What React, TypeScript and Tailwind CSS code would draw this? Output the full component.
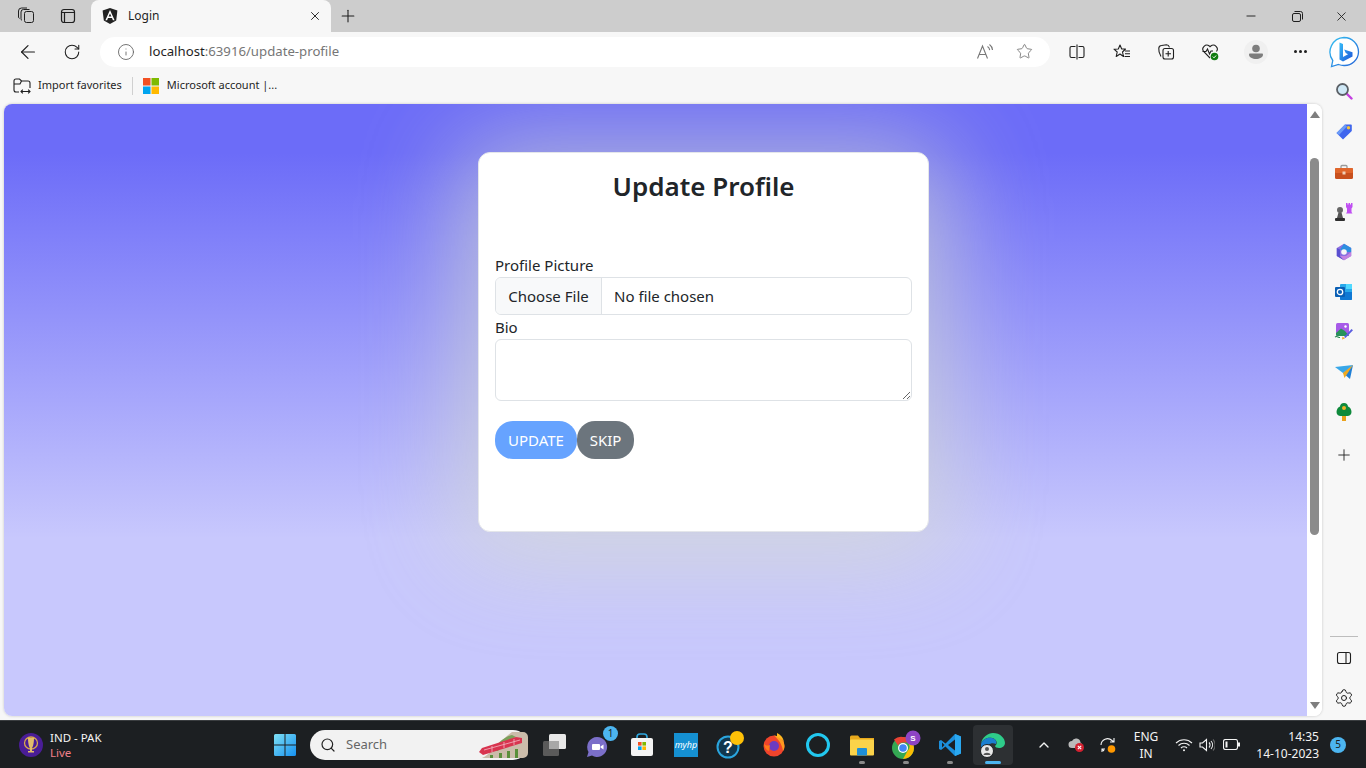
import { ArrowLeft, ChevronUp, Info, Minus, Plus, RotateCw, Search, Settings, Star, X } from "lucide-react";

const ink = "#1f1f1f";

function Collections() {
  return (
    <svg width="18" height="18" viewBox="0 0 18 18" fill="none" stroke={ink} strokeWidth="1">
      <rect x="7.5" y="4.5" width="9" height="11" rx="2" />
      <path d="M5 13.5a2 2 0 0 1-1-1.7V5a2.5 2.5 0 0 1 2.5-2.5h6M2.5 11.5A2 2 0 0 1 1.5 10V4A3 3 0 0 1 4.500 1H10" />
    </svg>
  );
}

function TabView() {
  return (
    <svg width="16" height="16" viewBox="0 0 16 16" fill="none" stroke={ink} strokeWidth="1.2">
      <rect x="1.500" y="1.500" width="13" height="13" rx="2.500" />
      <path d="M1.500 4.500h13M4.500 4.500v10" />
    </svg>
  );
}

function AngularLogo() {
  return (
    <svg width="16" height="16" viewBox="0 0 16 16">
      <path d="M8 0 .6 2.600l1.200 9.800L8 16l6.200-3.600 1.200-9.800z" fill="#222" />
      <path d="M8 2 3.400 12.200h1.700l.9-2.300h4l.9 2.300h1.700zm0 3.600 1.400 3H6.600z" fill="#fff" />
    </svg>
  );
}

function RestoreIcon() {
  return (
    <svg width="11" height="11" viewBox="0 0 11 11" fill="none" stroke={ink} strokeWidth="1">
      <rect x=".5" y="2.500" width="8" height="8" rx="1.500" />
      <path d="M2.500.5h6a2 2 0 0 1 2 2v6" />
    </svg>
  );
}

function ReadAloud() {
  return (
    <svg width="18" height="18" viewBox="0 0 18 18" fill="none" stroke="#777" strokeWidth="1.100">
      <path d="M1.500 15.500 6.500 3l5 12.500M3.200 11.500h6.600" />
      <path d="M11.500 3.500a5 5 0 0 1 2.200 3.600M13.500 1.500a7.500 7.500 0 0 1 3 5.500" />
    </svg>
  );
}

function SplitScreen() {
  return (
    <svg width="16" height="16" viewBox="0 0 16 16" fill="none" stroke={ink} strokeWidth="1.100">
      <path d="M6.500 2.500H2.500a1.500 1.500 0 0 0-1.500 1.500v8a1.500 1.500 0 0 0 1.500 1.500h4M9.500 2.500h4a1.500 1.500 0 0 1 1.500 1.500v8a1.500 1.500 0 0 1-1.500 1.500h-4M8 .5v15" />
    </svg>
  );
}

function Favorites() {
  return (
    <svg width="18" height="18" viewBox="0 0 18 18" fill="none" stroke={ink} strokeWidth="1.100">
      <path d="M7 2 8.700 6h3.800L9.500 9l1 4.500L7 11l-3.800 2.500 1-4.500L1 6.200 5.300 6z" strokeLinejoin="round" />
      <path d="M12 8h5M12 10.800h5M11.500 13.500H17" />
    </svg>
  );
}

function CollectionsPlus() {
  return (
    <svg width="18" height="18" viewBox="0 0 18 18" fill="none" stroke={ink} strokeWidth="1.100">
      <rect x="6" y="5.500" width="10.500" height="10.500" rx="2" />
      <path d="M11.200 8v5.500M8.500 10.700H14" />
      <path d="M4 13.500C2.500 11 1.500 8 1.800 5.500A3 3 0 0 1 4.500 2.500L9.500 1.800c1.500 0 2.500 1 3 2.500" />
    </svg>
  );
}

function HeartBeat() {
  return (
    <svg width="18" height="18" viewBox="0 0 18 18" fill="none">
      <path d="M9 15 2.600 8.500a4 4 0 0 1 5.700-5.500L9 3.800l.8-.8a4 4 0 0 1 5.700 5.500" stroke={ink} strokeWidth="1.100" />
      <path d="M1.500 8.500h3.500l1.500-2.500 2 5 1.500-3h2" stroke={ink} strokeWidth="1.100" />
      <circle cx="13.500" cy="13.500" r="3.800" fill="#107c10" />
      <path d="m11.800 13.600 1.200 1.200 2.100-2.300" stroke="#fff" strokeWidth="1" />
    </svg>
  );
}

function Avatar() {
  return (
    <div className="flex h-6 w-6 items-center justify-center rounded-full bg-[#f0f0f0]">
      <svg width="14" height="16" viewBox="0 0 14 16" fill="#7d7d7d">
        <circle cx="7" cy="4.500" r="3.800" />
        <path d="M1 9.500h12c.8 0 1 .7 1 1.200 0 2.500-3.500 4.300-7 4.300s-7-1.800-7-4.300c0-.5.200-1.200 1-1.200z" />
      </svg>
    </div>
  );
}

function BingLogo() {
  return (
    <svg width="32" height="32" viewBox="0 0 32 32">
      <defs>
        <linearGradient id="bingRing" x1="0" y1="0" x2="1" y2="1">
          <stop offset="0" stopColor="#35c1f1" />
          <stop offset="1" stopColor="#2563d8" />
        </linearGradient>
        <linearGradient id="bingB" x1="0" y1="0" x2="1" y2="1">
          <stop offset="0" stopColor="#37bdf8" />
          <stop offset="1" stopColor="#1b54d8" />
        </linearGradient>
      </defs>
      <path d="M16 1.500A14.500 14.500 0 0 1 30.500 16 14 14 0 0 1 16 29.500c-2 0-3.800-.4-5.500-1L3.500 30.500l1.300-6A14.500 14.500 0 0 1 16 1.500z" fill="#fff" stroke="url(#bingRing)" strokeWidth="1.300" />
      <path d="M11.500 6.500 15 8v13l5-2.800-2.300-1.100-1.500-3.700 8.300 2.900v4.100L15 25.500l-3.500-2z" fill="url(#bingB)" />
    </svg>
  );
}

function ImportFavorites() {
  return (
    <svg width="18" height="18" viewBox="0 0 18 18" fill="none" stroke={ink} strokeWidth="1.100">
      <path d="M6 15H3a2 2 0 0 1-2-2V4a2 2 0 0 1 2-2h3.500L8.500 4H15a2 2 0 0 1 2 2v5" />
      <path d="M1 7h6l1.500-3M8 14.500h9M9.800 12.700 8 14.500l1.800 1.800M15.200 12.700l1.800 1.800-1.800 1.800" />
    </svg>
  );
}

function MicrosoftLogo({ size = 16 }: { size?: number }) {
  return (
    <svg width={size} height={size} viewBox="0 0 16 16">
      <rect width="7.500" height="7.500" fill="#f25022" />
      <rect x="8.500" width="7.500" height="7.500" fill="#7fba00" />
      <rect y="8.500" width="7.500" height="7.500" fill="#00a4ef" />
      <rect x="8.500" y="8.500" width="7.500" height="7.500" fill="#ffb900" />
    </svg>
  );
}

function SideSearch() {
  return (
    <svg width="18" height="18" viewBox="0 0 18 18" fill="none">
      <path d="m11.500 11.500 5 5" stroke="#c33ee0" strokeWidth="2.400" strokeLinecap="round" />
      <circle cx="7.500" cy="7.500" r="5.500" fill="#cfe8f6" stroke="#5b6066" strokeWidth="1.800" />
    </svg>
  );
}

function SideTag() {
  return (
    <svg width="18" height="18" viewBox="0 0 18 18">
      <path d="M1.500 10.500 10 2h6a.8.8 0 0 1 .8.800V8.500L8 17z" fill="#3f66ee" transform="translate(0 -.5)" />
      <path d="M1.500 10 10 1.500l2 2L4 12z" fill="#6c9bf7" />
      <circle cx="13.500" cy="4.700" r="1.700" fill="#f5c33b" />
    </svg>
  );
}

function SideToolbox() {
  return (
    <svg width="18" height="16" viewBox="0 0 18 16">
      <path d="M6 4V2.500A1 1 0 0 1 7 1.500h4a1 1 0 0 1 1 1V4" fill="none" stroke="#9a9a9a" strokeWidth="1.300" />
      <rect y="4" width="18" height="11" rx="1.500" fill="#c8501e" />
      <rect y="4" width="18" height="5" rx="1" fill="#e0662c" />
      <rect x="7.500" y="7.500" width="3" height="3" fill="#f0d0b8" />
    </svg>
  );
}

function SideChess() {
  return (
    <svg width="20" height="20" viewBox="0 0 20 20">
      <path d="M12 1h1.500v1.500h1V1H16v1.500h1V1h1.500v4l-1 1.500V10l1 1.500H12l1-1.500V6.500L12 5z" fill="#c04ff2" />
      <circle cx="6" cy="8" r="3" fill="#666" />
      <path d="M4.500 10.500h3L9 16H3z" fill="#555" />
      <rect x="1" y="16" width="10" height="3" rx="1" fill="#2e2e2e" />
    </svg>
  );
}

function SideM365() {
  return (
    <svg width="18" height="18" viewBox="0 0 18 18">
      <path d="M9 .8 16.200 5v8L9 17.200 1.800 13V5z" fill="#8c6fe0" />
      <path d="M9 .8 16.200 5v4H9L5 6.500z" fill="#2d8fe0" />
      <path d="M1.800 5 5 6.500V13l4 4.200L1.800 13z" fill="#5a4fd0" />
      <path d="M16.200 9v4L9 17.200 5 13h6z" fill="#c483e0" />
      <circle cx="9" cy="9" r="2.800" fill="#f7f7f7" />
    </svg>
  );
}

function SideOutlook() {
  return (
    <svg width="18" height="18" viewBox="0 0 18 18">
      <rect x="5" y="1" width="12" height="16" rx="1" fill="#28a8ea" />
      <path d="M5 9h12v7a1 1 0 0 1-1 1H6a1 1 0 0 1-1-1z" fill="#0f78d4" />
      <rect x="11" y="1" width="6" height="5" fill="#50d9ff" />
      <rect x="0" y="4" width="10" height="10" rx="1" fill="#0a5fb4" />
      <circle cx="5" cy="9" r="2.700" fill="none" stroke="#fff" strokeWidth="1.300" />
    </svg>
  );
}

function SideDesigner() {
  return (
    <svg width="20" height="20" viewBox="0 0 20 20">
      <rect x="2" y="1" width="13" height="13" rx="1.500" fill="#a75ae8" />
      <path d="M2 11 7 6.500 11 9l4 5H3.500A1.500 1.500 0 0 1 2 12.500z" fill="#28925a" />
      <circle cx="11.500" cy="4.500" r="1.200" fill="#fff" />
      <path d="m10 15 7.500-8 1.500 1.300L11.500 16z" fill="#5a5de0" />
      <path d="m8.500 14.500 2.500 2-3 1z" fill="#f0a830" />
      <path d="M1 15c2-1.500 3 .5 5 .5" stroke="#1f8a4a" strokeWidth="1.100" fill="none" />
    </svg>
  );
}

function SideSend() {
  return (
    <svg width="18" height="16" viewBox="0 0 18 16">
      <path d="M0 3 18 1 8 9z" fill="#39a7e8" />
      <path d="M18 1 15 15 8 9z" fill="#1f7fd6" />
      <path d="M8 9 9.500 14 18 1z" fill="#f0a920" />
    </svg>
  );
}

function SideTree() {
  return (
    <svg width="16" height="18" viewBox="0 0 16 18">
      <rect x="6" y="12" width="4" height="6" fill="#eba21c" />
      <path d="M8 0c2.500 0 4 1.700 4 3.500 2 .8 3.500 3 3.500 5.500 0 2.500-2 4-4 4h-7c-2 0-4-1.500-4-4 0-2.500 1.500-4.700 3.500-5.500C4 1.700 5.500 0 8 0z" fill="#0f8a3c" />
      <circle cx="8" cy="5" r="2" fill="#eeb428" />
    </svg>
  );
}

function SidePanel() {
  return (
    <svg width="16" height="16" viewBox="0 0 16 16" fill="none" stroke={ink} strokeWidth="1.100">
      <rect x="1.500" y="2.500" width="13" height="11" rx="2" />
      <path d="M10 2.500v11" />
    </svg>
  );
}

function Trophy() {
  return (
    <svg width="24" height="24" viewBox="0 0 24 24">
      <circle cx="12" cy="12" r="12" fill="#4a1d96" />
      <ellipse cx="12" cy="10" rx="6.500" ry="6" fill="none" stroke="#d9a94b" strokeWidth="1.300" />
      <path d="M9 5h6c0 5-1 9-2 10v3h2v1.500H9V18h2v-3c-1-1-2-5-2-10z" fill="#e3bd6b" />
    </svg>
  );
}

function StartLogo() {
  return (
    <svg width="24" height="24" viewBox="0 0 24 24">
      <defs>
        <linearGradient id="startGrad" x1="0" y1="0" x2="1" y2="1">
          <stop offset="0" stopColor="#7fe0f5" />
          <stop offset="1" stopColor="#1590f0" />
        </linearGradient>
      </defs>
      <path d="M1 2.500A1.500 1.500 0 0 1 2.500 1h9v10.500H1zM12.500 1h9A1.500 1.500 0 0 1 23 2.500v9H12.500zM1 12.500h10.500V23h-9A1.500 1.500 0 0 1 1 21.500zM12.500 12.500H23v9a1.500 1.500 0 0 1-1.500 1.500h-9z" fill="url(#startGrad)" />
    </svg>
  );
}

function TrainArt() {
  return (
    <svg width="50" height="28" viewBox="0 0 50 28">
      <path d="M34 1h11a5 5 0 0 1 5 5v16a5 5 0 0 1-5 5H4C12 24 24 8 34 1z" fill="#cbbcaa" />
      <path d="M14 20C20 12 26 6 34 4l4 2C30 9 24 14 20 20z" fill="#7aa05a" />
      <path d="M1 21l3-4 34-11 6 1v5L5 24z" fill="#d8344f" />
      <path d="M6 19l36-10M14 15v6M26 11v6M36 8v6" stroke="#f4b8c4" strokeWidth=".8" />
      <path d="M12 27v-3h3v3zM21 27v-5h3v5zM29 27v-7h3v7zM37 27v-9h3v9z" fill="#5a8f3a" />
    </svg>
  );
}

function TaskView() {
  return (
    <svg width="24" height="24" viewBox="0 0 24 24">
      <rect x="1" y="8" width="16" height="15" rx="1.500" fill="#5a5a5a" />
      <rect x="7" y="1" width="17" height="15" rx="1.500" fill="#e8e8e8" />
      <rect x="7" y="8" width="10" height="8" fill="#a8a8a8" />
    </svg>
  );
}

function TeamsIcon() {
  return (
    <svg width="26" height="26" viewBox="0 0 26 26">
      <path d="M12 5a10 10 0 1 1-5 18.600L2 25l1.500-5A10 10 0 0 1 12 5z" fill="#7b6fc9" />
      <rect x="7" y="12" width="8" height="6" rx="1" fill="#fff" />
      <path d="m15.500 14.500 3-2v5l-3-2z" fill="#fff" />
    </svg>
  );
}

function StoreIcon() {
  return (
    <svg width="24" height="24" viewBox="0 0 24 24">
      <path d="M7 6V4a3 3 0 0 1 3-3h4a3 3 0 0 1 3 3v2" fill="none" stroke="#2ea8e0" strokeWidth="1.600" />
      <rect x="1" y="5" width="22" height="18" rx="2" fill="#f4f4f4" />
      <rect x="8" y="9" width="3.600" height="3.600" fill="#f25022" />
      <rect x="12.400" y="9" width="3.600" height="3.600" fill="#7fba00" />
      <rect x="8" y="13.400" width="3.600" height="3.600" fill="#00a4ef" />
      <rect x="12.400" y="13.400" width="3.600" height="3.600" fill="#ffb900" />
    </svg>
  );
}

function HelpIcon() {
  return (
    <svg width="28" height="28" viewBox="0 0 28 28">
      <circle cx="12" cy="16" r="10.500" fill="#12374d" stroke="#2aa5de" strokeWidth="2" />
      <text x="12" y="22" textAnchor="middle" fontFamily="Liberation Sans, sans-serif" fontWeight="700" fontSize="16" fill="#fff">?</text>
      <circle cx="21" cy="7" r="7" fill="#ffc107" />
    </svg>
  );
}

function FirefoxIcon() {
  return (
    <svg width="24" height="24" viewBox="0 0 24 24">
      <circle cx="12" cy="13" r="10.500" fill="#f0442c" />
      <path d="M12 2.500A10.500 10.500 0 0 1 22.500 13c0 2-.5 3.500-1.500 5-1-6-3-10-9-15.500z" fill="#ff9a1f" />
      <path d="M15 0c2 1 6 3 7 9-2-3-4-4-7-5z" fill="#ffb81f" />
      <circle cx="12" cy="13" r="5" fill="#6c3bc1" />
      <path d="M2 10c1 3 4 3 6 2l-1 6c-3-1-5-4-5-8z" fill="#ff7a18" />
    </svg>
  );
}

function FilesIcon() {
  return (
    <svg width="24" height="24" viewBox="0 0 24 24">
      <path d="M0 4a1.500 1.500 0 0 1 1.500-1.500H8L10 5h14v3H0z" fill="#e8a91c" />
      <rect y="6.500" width="24" height="16" rx="1" fill="#fbd34a" />
      <rect x="7" y="15" width="10" height="7.500" rx="1" fill="#1f8fd6" />
    </svg>
  );
}

function ChromeIcon() {
  return (
    <svg width="30" height="30" viewBox="0 0 30 30">
      <circle cx="12" cy="18" r="11" fill="#34a853" />
      <path d="M12 7a11 11 0 0 1 9.500 5.500H12a5.500 5.500 0 0 0-5 3L3 9.500A11 11 0 0 1 12 7z" fill="#ea4335" />
      <path d="M21.500 12.500A11 11 0 0 1 12 29l4.500-8a5.500 5.500 0 0 0 .2-8.500z" fill="#fbbc04" />
      <circle cx="12" cy="18" r="5" fill="#fff" />
      <circle cx="12" cy="18" r="3.800" fill="#4285f4" />
      <circle cx="22" cy="8" r="7.500" fill="#8e44c4" />
      <text x="22" y="11" textAnchor="middle" fontFamily="Liberation Sans, sans-serif" fontWeight="700" fontSize="8" fill="#fff">S</text>
    </svg>
  );
}

function VsCodeIcon() {
  return (
    <svg width="24" height="24" viewBox="0 0 24 24">
      <path d="M17 1 7.500 10.500 3 7 1 8v8l2 1 4.500-3.500L17 23l6-2.500v-17z" fill="#1c8fdc" />
      <path d="M17 6.500 10 12l7 5.500z" fill="#1c1f22" />
      <path d="M17 1l6 2.500v17L17 23z" fill="#2aa8f0" />
      <path d="m4 9.500 2.500 2.500L4 14.500z" fill="#1c1f22" />
    </svg>
  );
}

function EdgeIcon() {
  return (
    <svg width="26" height="26" viewBox="0 0 26 26">
      <path d="M1 12C2 5 8 1 13 1c7 0 12 5 12 10 0 3-3 5-6 5-2 0-4-1-4-2 3-2 2-7-3-8-5-1-10 2-11 6z" fill="#2ecc8a" />
      <path d="M1 12c1-4 6-7 11-6 4 1 5 4 4 6-4-2-9 0-10 5l-.5 5C2 20 1 16 1 12z" fill="#1b7fd0" />
      <circle cx="7" cy="19" r="6.500" fill="#e8e8e8" stroke="#1c1f22" />
      <circle cx="7" cy="17" r="2" fill="#555" />
      <path d="M3.500 23c0-3 7-3 7 0z" fill="#555" />
    </svg>
  );
}

function CloudOff() {
  return (
    <svg width="18" height="16" viewBox="0 0 18 16">
      <path d="M5 11a3.500 3.500 0 0 1 0-7 4.500 4.500 0 0 1 8.500 1.500A3 3 0 0 1 13 11z" fill="#bbb" />
      <circle cx="12.500" cy="10.500" r="4.500" fill="#d32030" />
      <path d="m10.800 8.800 3.400 3.400m0-3.400-3.400 3.400" stroke="#fff" strokeWidth="1.100" />
    </svg>
  );
}

function SyncIcon() {
  return (
    <svg width="18" height="18" viewBox="0 0 18 18" fill="none" stroke="#f4f4f4" strokeWidth="1.100">
      <path d="M2 9a6.500 6.500 0 0 1 11-4.500l2 1.500M15 2v4h-4" />
      <path d="M3 13l2 2M3 16v-3h3" />
      <circle cx="12.500" cy="13" r="3.800" fill="#ff9800" stroke="none" />
    </svg>
  );
}

function WifiIcon() {
  return (
    <svg width="18" height="14" viewBox="0 0 18 14" fill="none" stroke="#f4f4f4" strokeWidth="1.100">
      <path d="M1 5a11.500 11.500 0 0 1 16 0M3.500 7.500a8 8 0 0 1 11 0M6 10a4.200 4.200 0 0 1 6 0" />
      <circle cx="9" cy="12.300" r="1" fill="#f4f4f4" stroke="none" />
    </svg>
  );
}

function SpeakerIcon() {
  return (
    <svg width="16" height="14" viewBox="0 0 16 14" fill="none" stroke="#f4f4f4" strokeWidth="1.100">
      <path d="M1 5h2.500L7.500 1.500v11L3.500 9H1z" />
      <path d="M10 4.500a3.500 3.500 0 0 1 0 5M12 3a6 6 0 0 1 0 8" />
      <path d="M14 1.500a8 8 0 0 1 0 11" stroke="#666" />
    </svg>
  );
}

function BatteryIcon() {
  return (
    <svg width="17" height="11" viewBox="0 0 17 11" fill="none" stroke="#f4f4f4" strokeWidth="1.100">
      <rect x=".5" y=".5" width="14" height="10" rx="2" />
      <rect x="2.500" y="2.500" width="2" height="6" fill="#f4f4f4" stroke="none" />
      <rect x="15" y="3.500" width="2" height="4" fill="#f4f4f4" stroke="none" />
    </svg>
  );
}

function PinDot() {
  return <span className="absolute bottom-[1px] left-1/2 h-[3px] w-[6px] -translate-x-1/2 rounded-full bg-[#8a8a8a]" />;
}

function TaskIcon({ children, pinned }: { children: React.ReactNode; pinned?: boolean }) {
  return (
    <div className="relative flex h-10 w-11 items-center justify-center">
      {children}
      {pinned && <PinDot />}
    </div>
  );
}

const sideIcons = [SideTag, SideToolbox, SideChess, SideM365, SideOutlook, SideDesigner, SideSend, SideTree];

export default function App() {
  return (
    <div className="flex h-screen w-[1366px] flex-col overflow-hidden bg-[#f7f7f7] font-['Noto_Sans',sans-serif] text-[#1f1f1f]">
      {/* tab strip */}
      <div className="flex h-8 shrink-0 items-center bg-[#cdcdcd]">
        <div className="flex w-[91px] items-center pl-[17px]">
          <Collections />
          <div className="ml-[25px]">
            <TabView />
          </div>
        </div>
        <div className="flex h-8 w-[240px] items-center rounded-t-lg bg-[#f7f7f7] pl-[11px] pr-[9px]">
          <AngularLogo />
          <span className="ml-[10px] flex-1 text-xs">Login</span>
          <X size={14} strokeWidth={1.6} />
        </div>
        <Plus size={20} strokeWidth={1.3} className="ml-[7px]" />
        <div className="ml-auto flex items-center pr-[17px]">
          <Minus size={14} strokeWidth={1.6} />
          <div className="ml-[34px]">
            <RestoreIcon />
          </div>
          <X size={15} strokeWidth={1.4} className="ml-[31px]" />
        </div>
      </div>

      {/* toolbar */}
      <div className="flex h-[39px] shrink-0 items-center pl-[17px]">
        <ArrowLeft size={22} strokeWidth={1.3} />
        <RotateCw size={18} strokeWidth={1.4} className="ml-[24px]" />
        <div className="ml-[19px] flex h-[30px] w-[950px] shrink-0 items-center rounded-full bg-white pl-[17px] pr-[17px]">
          <Info size={18} strokeWidth={1.2} className="text-[#666]" />
          <span className="ml-[14px] flex-1 text-[13.2px]">
            localhost<span className="text-[#767676]">:63916/update-profile</span>
          </span>
          <ReadAloud />
          <Star size={17} strokeWidth={1.1} className="ml-[22px] text-[#666]" />
        </div>
        <div className="ml-[19px]">
          <SplitScreen />
        </div>
        <div className="ml-[28px]">
          <Favorites />
        </div>
        <div className="ml-[26px]">
          <CollectionsPlus />
        </div>
        <div className="ml-[26px]">
          <HeartBeat />
        </div>
        <div className="ml-[25px]">
          <Avatar />
        </div>
        <div className="ml-[26px] flex gap-[2px]">
          <span className="h-[3px] w-[3px] rounded-full bg-[#1f1f1f]" />
          <span className="h-[3px] w-[3px] rounded-full bg-[#1f1f1f]" />
          <span className="h-[3px] w-[3px] rounded-full bg-[#1f1f1f]" />
        </div>
        <div className="ml-[21px] shrink-0">
          <BingLogo />
        </div>
      </div>

      {/* page + sidebar */}
      <div className="flex min-h-0 flex-1">
        <div className="flex w-[1322px] flex-col">
          <div className="flex h-[29px] shrink-0 items-center pl-[13px] text-[11px]">
            <ImportFavorites />
            <span className="ml-[7px]">Import favorites</span>
            <span className="ml-[10px] mr-[10px] h-[18px] w-px bg-[#d0d0d0]" />
            <MicrosoftLogo />
            <span className="ml-2">Microsoft account |...</span>
          </div>
          <div className="ml-1 mt-1 mb-1 flex min-h-0 flex-1 overflow-hidden rounded-lg bg-white shadow-[0_0_3px_rgba(0,0,0,0.2)]">
            <div className="flex-1 bg-[linear-gradient(180deg,#6c6cf8_8%,#c8c8fd_71%)] pl-[474px] pt-12">
              <div className="h-[380px] w-[451px] rounded-xl border border-[#e4e6ea] bg-white px-4 shadow-[0_8px_100px_20px_rgba(215,222,205,0.66)]">
                <h2 className="mt-[11px] text-center text-[26px] leading-[44px] font-semibold text-[#212529]">Update Profile</h2>
                <label className="mt-[45px] block text-[15px] leading-6 text-[#212529]">Profile Picture</label>
                <div className="flex h-[38px] items-center overflow-hidden rounded-md border border-[#dee2e6] text-[15px] text-[#212529]">
                  <span className="flex h-full w-[106px] items-center justify-center border-r border-[#dee2e6] bg-[#f8f9fa]">Choose File</span>
                  <span className="ml-3">No file chosen</span>
                </div>
                <label className="block text-[15px] leading-6 text-[#212529]">Bio</label>
                <textarea className="block h-[62px] w-full resize-y rounded-md border border-[#dee2e6] bg-white" />
                <div className="mt-5 flex">
                  <button className="h-[38px] w-[82px] rounded-[18px] bg-[#66a3ff] text-[15px] text-white">UPDATE</button>
                  <button className="h-[38px] w-[57px] rounded-[18px] bg-[#6c757d] text-[15px] text-white">SKIP</button>
                </div>
              </div>
            </div>
            <div className="flex w-[15px] flex-col items-center justify-between bg-white py-[7px]">
              <span className="h-0 w-0 border-x-[5px] border-b-[7px] border-x-transparent border-b-[#7e7e7e]" />
              <span className="mb-auto mt-10 h-[377px] w-[9px] rounded-full bg-[#8b8b8b]" />
              <span className="h-0 w-0 border-x-[5px] border-t-[7px] border-x-transparent border-t-[#7e7e7e]" />
            </div>
          </div>
        </div>

        <div className="flex w-11 flex-col items-center pt-[11px]">
          <div className="flex h-[18px] items-center">
            <SideSearch />
          </div>
          <div className="mt-3 flex flex-col items-center">
            {sideIcons.map((Icon, i) => (
              <div key={i} className="flex h-10 w-full items-center justify-center">
                <Icon />
              </div>
            ))}
            <Plus size={18} strokeWidth={1.2} className="mt-[14px]" />
          </div>
          <div className="mt-auto w-7 border-t border-[#bdbdbd]" />
          <div className="mt-[13px]">
            <SidePanel />
          </div>
          <Settings size={20} strokeWidth={1.2} className="mb-3 mt-[22px]" />
        </div>
      </div>

      {/* taskbar */}
      <div className="flex h-12 shrink-0 items-center border-t border-[#3a3d40] bg-[#1c1f22] pl-[19px] text-[#f4f4f4]">
        <Trophy />
        <div className="ml-[7px] w-[223px] text-[11.5px] leading-[15px]">
          <div>IND - PAK</div>
          <div className="text-[#f0808a]">Live</div>
        </div>
        <div className="w-[37px]">
          <StartLogo />
        </div>
        <div className="flex h-[30px] w-[218px] items-center rounded-full bg-[#f2f2f2] pl-[10px] text-[#666]">
          <Search size={16} strokeWidth={1.8} className="text-[#222]" />
          <span className="ml-[10px] flex-1 text-[13px]">Search</span>
          <TrainArt />
        </div>
        <div className="ml-[4px] flex items-center">
          <TaskIcon><TaskView /></TaskIcon>
          <TaskIcon>
            <TeamsIcon />
            <span className="absolute right-[2px] top-[1px] flex h-[15px] w-[15px] items-center justify-center rounded-full bg-[#4cb5f0] text-[10px] text-[#1c1f22]">1</span>
          </TaskIcon>
          <TaskIcon><StoreIcon /></TaskIcon>
          <TaskIcon>
            <div className="flex h-6 w-6 items-center justify-center bg-[#1590d2] text-[9px] italic text-white">myhp</div>
          </TaskIcon>
          <TaskIcon><HelpIcon /></TaskIcon>
          <TaskIcon><FirefoxIcon /></TaskIcon>
          <TaskIcon>
            <span className="h-6 w-6 rounded-full border-[3px] border-[#22c8f0]" />
          </TaskIcon>
          <TaskIcon pinned><FilesIcon /></TaskIcon>
          <TaskIcon pinned><ChromeIcon /></TaskIcon>
          <TaskIcon pinned><VsCodeIcon /></TaskIcon>
          <div className="relative ml-px flex h-10 w-10 items-center justify-center rounded bg-[#2d3033]">
            <EdgeIcon />
            <span className="absolute bottom-[1px] left-1/2 h-[3px] w-4 -translate-x-1/2 rounded-full bg-[#4cb5f0]" />
          </div>
        </div>
        <ChevronUp size={16} strokeWidth={2} className="ml-[23px]" />
        <div className="ml-[15px]"><CloudOff /></div>
        <div className="ml-[14px]"><SyncIcon /></div>
        <div className="ml-[11px] w-[36px] text-center text-xs leading-[17px]">
          <div>ENG</div>
          <div>IN</div>
        </div>
        <div className="ml-[11px]"><WifiIcon /></div>
        <div className="ml-[6px]"><SpeakerIcon /></div>
        <div className="ml-[8px]"><BatteryIcon /></div>
        <div className="ml-[10px] w-[69px] shrink-0 text-right text-xs leading-[17px]">
          <div>14:35</div>
          <div>14-10-2023</div>
        </div>
        <span className="ml-[11px] flex h-4 w-4 shrink-0 items-center justify-center rounded-full bg-[#4cb5f0] text-[10px] text-[#1c1f22]">5</span>
      </div>
    </div>
  );
}
